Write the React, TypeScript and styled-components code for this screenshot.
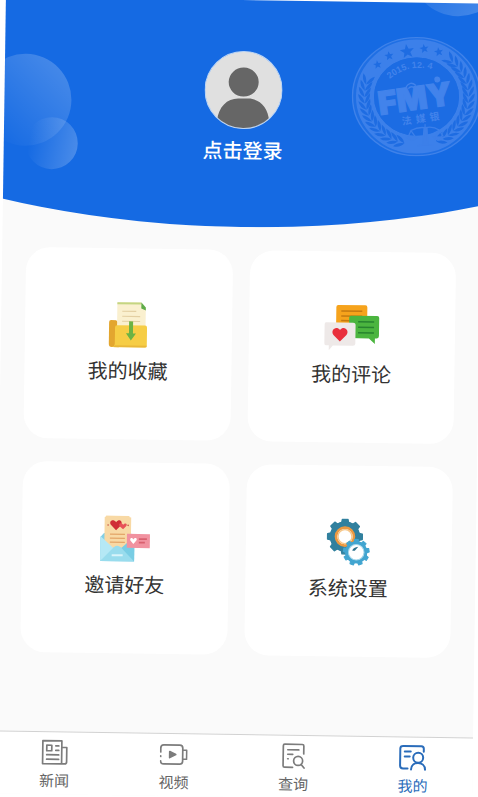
import React from "react";
import styled, { createGlobalStyle } from "styled-components";

const GlobalStyle = createGlobalStyle`
  * { box-sizing: border-box; }
  body {
    margin: 0;
    background: #fff;
    font-family: "Noto Sans CJK SC", "Noto Sans", sans-serif;
  }
  button { font-family: inherit; border: 0; cursor: pointer; }
`;

const Viewport = styled.div`
  min-height: 100vh;
  overflow: hidden;
`;

const Screen = styled.div`
  display: flex;
  flex-direction: column;
  min-height: 100vh;
  background: #fafafa;
  transform: rotate(0.85deg);
`;

const Header = styled.header`
  position: relative;
  display: flex;
  justify-content: center;
  height: 227px;
  padding-top: 51px;
  background: #156ae3;
  clip-path: ellipse(110% 100% at 50% 0);
`;

const Bubble = styled.span<{ $x: string; $y: number; $r: number; $angle: number }>`
  position: absolute;
  left: ${(p) => p.$x};
  top: ${(p) => p.$y - p.$r}px;
  width: ${(p) => p.$r * 2}px;
  height: ${(p) => p.$r * 2}px;
  margin-left: ${(p) => -p.$r}px;
  border-radius: 50%;
  background: linear-gradient(${(p) => p.$angle}deg, rgba(255, 255, 255, 0) 12%, rgba(255, 255, 255, 0.24));
`;

const EmblemSvg = styled.svg`
  position: absolute;
  top: 34px;
  right: 1px;
  width: 130px;
  height: 120px;
`;

const Login = styled.button`
  display: flex;
  flex-direction: column;
  align-items: center;
  align-self: flex-start;
  gap: 7px;
  padding: 0;
  background: none;
  color: #fff;
  font-size: 20px;
  font-weight: 500;
  line-height: 28px;
`;

const Menu = styled.main`
  flex: 1;
  display: grid;
  grid-template-columns: 1fr 1fr;
  align-content: start;
  gap: 23px 17px;
  padding: 23px 24px;
`;

const Card = styled.button`
  display: flex;
  flex-direction: column;
  align-items: center;
  gap: 7px;
  height: 191px;
  padding: 53px 0 0;
  border-radius: 24px;
  background: #fff;
  color: #333;
  font-size: 20px;
  line-height: 28px;
`;

const CardIcon = styled.svg`
  width: 56px;
  height: 48px;
`;

const TabBar = styled.nav`
  display: flex;
  border-top: 1px solid #d2d2d2;
  background: #fff;
`;

const Tab = styled.button<{ $active?: boolean }>`
  flex: 1;
  display: flex;
  flex-direction: column;
  align-items: center;
  gap: 4px;
  padding: 6px 0 4px;
  background: none;
  color: ${(p) => (p.$active ? "#2a6cba" : "#666")};
  font-size: 15px;
  line-height: 20px;
`;

const TabIcon = styled.svg<{ $active?: boolean }>`
  width: 28px;
  height: 28px;
  fill: none;
  stroke: ${(p) => (p.$active ? "#2a6cba" : "#7c7c7c")};
  stroke-width: ${(p) => (p.$active ? 2 : 1.7)};
  stroke-linecap: round;
  stroke-linejoin: round;
`;

function starPoints(cx: number, cy: number, r: number) {
  return Array.from({ length: 10 }, (_, i) => {
    const a = ((-100 + i * 36) * Math.PI) / 180;
    const d = i % 2 ? r * 0.42 : r;
    return `${(cx + d * Math.cos(a)).toFixed(1)},${(cy + d * Math.sin(a)).toFixed(1)}`;
  }).join(" ");
}

function gearPoints(cx: number, cy: number, outer: number, inner: number, teeth: number) {
  const step = 360 / teeth;
  const pts: string[] = [];
  for (let i = 0; i < teeth; i++) {
    const parts: [number, number][] = [[-0.3, inner], [-0.2, outer], [0.2, outer], [0.3, inner]];
    parts.forEach(([o, r]) => {
      const a = ((-90 + (i + o) * step) * Math.PI) / 180;
      pts.push(`${(cx + r * Math.cos(a)).toFixed(1)},${(cy + r * Math.sin(a)).toFixed(1)}`);
    });
  }
  return pts.join(" ");
}

/* Angles (clockwise from the right) at which the laurel leaves sit. */
const leftLeaves = Array.from({ length: 13 }, (_, i) => 106 + i * 7.6);
const rightLeaves = Array.from({ length: 16 }, (_, i) => 64 - i * 7.6);

function Leaf({ angle, dir }: { angle: number; dir: 1 | -1 }) {
  const a = (angle * Math.PI) / 180;
  const x = 65 + 52 * Math.cos(a);
  const y = 60 + 48 * Math.sin(a);
  const turn = angle + dir * 90;
  return (
    <g transform={`translate(${x.toFixed(1)} ${y.toFixed(1)}) rotate(${turn.toFixed(1)})`}>
      <path d="M-3 0Q0 -6 7 -6Q4 -1 -3 0Z" />
      <path d="M-3 0Q0 6 7 6Q4 1 -3 0Z" />
    </g>
  );
}

function Emblem() {
  return (
    <EmblemSvg viewBox="0 0 130 120" aria-hidden="true">
      <ellipse cx="65" cy="60" rx="64" ry="59" fill="#1f6fe4" stroke="#3f82e9" strokeWidth="1.4" />
      <ellipse cx="65" cy="60" rx="51.5" ry="48" fill="none" stroke="#3c80ea" strokeWidth="18" />
      <ellipse cx="65" cy="60" rx="42.5" ry="39" fill="#1c6ce3" />
      <g fill="#1e6ce2">
        {leftLeaves.map((a) => <Leaf key={a} angle={a} dir={1} />)}
        {rightLeaves.map((a) => <Leaf key={a} angle={a} dir={-1} />)}
        <polygon points={starPoints(25.6, 28.7, 4.5)} />
        <polygon points={starPoints(37, 19.7, 4.8)} />
        <polygon points={starPoints(55, 15, 7.5)} />
        <polygon points={starPoints(72, 12, 4.8)} />
        <polygon points={starPoints(86.6, 15, 4.8)} />
      </g>
      <path id="emblem-arc" d="M38 43Q58 25 86 34" fill="none" />
      <g fill="#4283eb">
        <text fontFamily="Liberation Sans, sans-serif" fontSize="9" fontWeight="700">
          <textPath href="#emblem-arc">2015. 12. 4</textPath>
        </text>
        <g transform="rotate(-9 65 60)">
          <text x="63" y="73" textAnchor="middle" fontFamily="Inter, sans-serif" fontSize="32" fontWeight="900" stroke="#4283eb" strokeWidth="1.2">FMY</text>
          <circle cx="88" cy="46" r="3" />
          <path d="M56 49q5-6 10 0M58 51q3-3 6 0" fill="none" stroke="#4283eb" strokeWidth="1.3" />
          <text x="47 61 75" y="86" fontFamily="Noto Sans CJK SC, sans-serif" fontSize="10" fontWeight="700">法媒银</text>
        </g>
      </g>
      <g stroke="#3c7fe9" strokeWidth="1.3" fill="#3c7fe9" strokeLinecap="round">
        <path d="M60 94Q67 90 74 91Q82 89 88 93M74 88V108M67 109L82 108M60 94L57 101M60 94L65 101M88 93L84 100M88 93L92 99" fill="none" />
        <path d="M56 101H66Q61 107 56 101ZM82 100H93Q88 106 82 100Z" />
        <path d="M73 92H76L77 108H72Z" />
      </g>
    </EmblemSvg>
  );
}

function Avatar() {
  return (
    <svg width="78" height="78" viewBox="0 0 78 78" aria-hidden="true">
      <defs>
        <clipPath id="avatar-clip"><circle cx="39" cy="39" r="38" /></clipPath>
      </defs>
      <circle cx="39" cy="39" r="38.5" fill="#e0e0e0" stroke="#bcd5f5" strokeWidth="1" />
      <g clipPath="url(#avatar-clip)" fill="#666">
        <ellipse cx="39" cy="31" rx="15" ry="14.5" />
        <path d="M13 80V70C14 56 23 47.5 34 47.5H44C55 47.5 64 56 65 70V80Z" />
      </g>
    </svg>
  );
}

function FavoritesIcon() {
  return (
    <CardIcon viewBox="-4 0 56 48" aria-hidden="true">
      <path d="M5 21Q5 19 7 19H12L15 22V46H8Q5 46 5 43Z" fill="#e3a62f" />
      <path d="M13 1H37L41.5 6V30H13Z" fill="#faf0cf" />
      <path d="M13 1H37V3H13Z" fill="#c4d582" />
      <path d="M37 1L41.5 6V9L37 7Z" fill="#5eac4a" />
      <path d="M18 10H32M18 15H36M18 20H36" stroke="#e3cfa2" strokeWidth="1.2" />
      <path d="M13 24H41Q43 24 43 26V44Q43 46 41 46H8Q11 45 11 42V26Q11 24 13 24Z" fill="#f6cd45" />
      <path d="M8 46H41Q43 46 43 44H11Q10 46 8 46Z" fill="#e9b83a" />
      <path d="M25 20H29V32H32L27 39L22 32H25Z" fill="#6bb344" />
    </CardIcon>
  );
}

function CommentsIcon() {
  return (
    <CardIcon viewBox="-4 0 56 48" aria-hidden="true">
      <path d="M10 .5H37Q39 .5 39 2.5V22H8V2.5Q8 .5 10 .5Z" fill="#f6a31c" />
      <path d="M13 6.5H34M13 11.5H34M13 16H22" stroke="#c57a10" strokeWidth="1.5" />
      <path d="M23 11H49Q51 11 51 13V31Q51 33.5 49 33.5H47V39L41 33.5H21V13Q21 11 23 11Z" fill="#4bb53f" />
      <path d="M30 17H46M30 22.5H46M30 28H46" stroke="#27842f" strokeWidth="1.5" />
      <path d="M-2 18H25Q27.5 18 27.5 20V39Q27.5 41 25 41H5L1 46V41H-2Q-3.5 41 -3.5 39V20Q-3.5 18 -2 18Z" fill="#eee9e8" />
      <path d="M12 37L5.5 30.5C2 26 8 20.5 12 25.5C16 20.5 22 26 18.5 30.5Z" fill="#e92f3c" />
    </CardIcon>
  );
}

function InviteIcon() {
  return (
    <CardIcon viewBox="-4 0 56 48" aria-hidden="true">
      <path d="M-.5 22L3 18H30L33.5 22V46H-.5Z" fill="#82cfe6" />
      <path d="M3.5 2Q5 2 5 .5H28Q28 2 30 2V34H3.5Z" fill="#f8d9a5" />
      <path d="M9 19H24M9 23H24M9 27H24" stroke="#e3a568" strokeWidth="1.3" />
      <path d="M15 15L10 10C7 6 12 3 15 7C18 3 22 6 20 10Z" fill="#cf2e36" />
      <path d="M22 14L18.5 11C17 8 20 7 22 9.5C24 7 27 8 25 11Z" fill="#e85158" />
      <circle cx="7" cy="10" r=".8" fill="#c85246" />
      <circle cx="27" cy="10" r=".8" fill="#c85246" />
      <path d="M-.5 21L15 35L-.5 46Z" fill="#b5e8f5" />
      <path d="M33.5 21L18 35L33.5 46Z" fill="#79cde4" />
      <path d="M-.5 46L13 32Q16.5 29 20 32L33.5 46Z" fill="#99dced" />
      <path d="M11 40H22" stroke="#d9f4fa" strokeWidth="2" />
      <rect x="26" y="18.5" width="23" height="14" fill="#f192a0" />
      <path d="M32.5 28.5L29.5 25C28.5 22.5 31 21.5 32.5 24C34 21.5 37 22.5 35.5 25Z" fill="#fff" />
      <path d="M38 23.5H46M38 27H44" stroke="#d9606f" strokeWidth="1.8" />
    </CardIcon>
  );
}

function SettingsIcon() {
  return (
    <CardIcon viewBox="-4 0 56 48" aria-hidden="true">
      <polygon points={gearPoints(20, 18, 17.5, 14.5, 8)} fill="#31809e" stroke="#31809e" strokeWidth="1.5" strokeLinejoin="round" />
      <circle cx="20" cy="18" r="15" fill="#31809e" />
      <circle cx="20" cy="18" r="9" fill="#fff" stroke="#eb9840" strokeWidth="2.6" />
      <circle cx="20" cy="18" r="7" fill="none" stroke="#f6c789" strokeWidth="1.4" />
      <polygon points={gearPoints(31.5, 33.5, 13, 10.5, 9)} fill="#42a5d0" stroke="#42a5d0" strokeLinejoin="round" />
      <circle cx="31.5" cy="33.5" r="11" fill="#42a5d0" />
      <circle cx="31.5" cy="33.5" r="7.8" fill="#fff" stroke="#a7d7ea" strokeWidth="1" />
      <path d="M27.5 32Q28.5 28.5 33.5 28L30 32Z" fill="#2c708a" />
    </CardIcon>
  );
}

const cards = [
  { label: "我的收藏", Icon: FavoritesIcon },
  { label: "我的评论", Icon: CommentsIcon },
  { label: "邀请好友", Icon: InviteIcon },
  { label: "系统设置", Icon: SettingsIcon },
];

const tabs = [
  {
    label: "新闻",
    icon: (
      <>
        <path d="M2 2.5H21V25.5H2ZM21 9H26V23.5Q26 25.5 24 25.5H21" />
        <path d="M6 7H11V12.5H6ZM15 7.5H18M15 12H18M6 16.5H18M6 21H18" />
      </>
    ),
  },
  {
    label: "视频",
    icon: (
      <>
        <path d="M1 12V8Q1 5 4 5H20Q23 5 23 8V21Q23 24 20 24H4Q1 24 1 21M1 16V16.5M23 10H27V19H23" />
        <path d="M10 11.5L16 14.5L10 17.5Z" fill="#7c7c7c" />
      </>
    ),
  },
  {
    label: "查询",
    icon: (
      <>
        <path d="M24 12V4Q24 2.5 22.5 2.5H5Q3.5 2.5 3.5 4V24Q3.5 25.5 5 25.5H13M8 8H19M8 12.5H13M8 17H8.5" />
        <circle cx="18.5" cy="19" r="4.5" />
        <path d="M21.5 22.5L24.5 26" />
      </>
    ),
  },
  {
    label: "我的",
    active: true,
    icon: (
      <>
        <path d="M25 8V5Q25 2.5 22.5 2.5H4.5Q1.5 2.5 1.5 5V22Q1.5 25 4.5 25H9M6 8H12M6 13H11" />
        <circle cx="19.5" cy="14" r="5" />
        <path d="M12.5 26C12.5 17 26.5 17 26.5 26" />
      </>
    ),
  },
];

export default function App() {
  return (
    <Viewport>
      <GlobalStyle />
      <Screen>
        <Header>
          <Bubble $x="21px" $y={103} $r={46} $angle={45} />
          <Bubble $x="48px" $y={146} $r={26} $angle={100} />
          <Bubble $x="calc(100% - 26px)" $y={-35} $r={48} $angle={125} />
          <Emblem />
          <Login type="button">
            <Avatar />
            点击登录
          </Login>
        </Header>
        <Menu>
          {cards.map(({ label, Icon }) => (
            <Card type="button" key={label}>
              <Icon />
              {label}
            </Card>
          ))}
        </Menu>
        <TabBar>
          {tabs.map(({ label, icon, active }) => (
            <Tab type="button" key={label} $active={active} aria-current={active ? "page" : undefined}>
              <TabIcon viewBox="0 0 28 28" $active={active} aria-hidden="true">{icon}</TabIcon>
              {label}
            </Tab>
          ))}
        </TabBar>
      </Screen>
    </Viewport>
  );
}
